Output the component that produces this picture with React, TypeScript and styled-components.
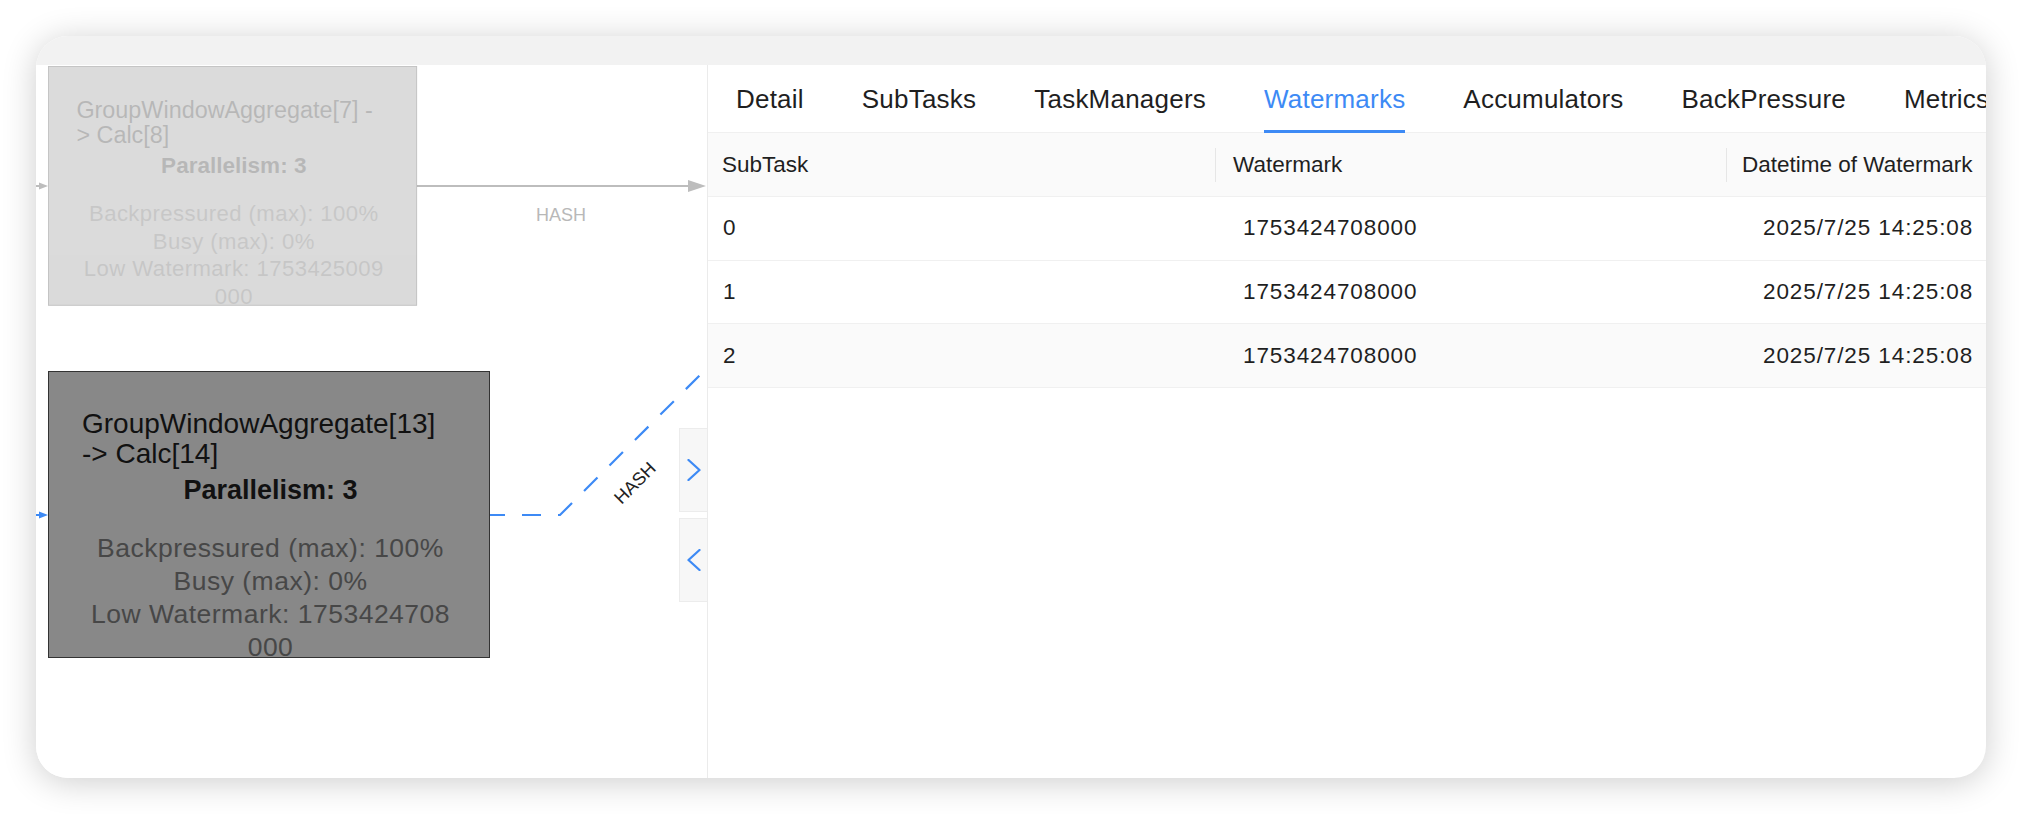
import React from "react";
import styled, { createGlobalStyle } from "styled-components";

const GlobalStyle = createGlobalStyle`
  html, body { margin: 0; padding: 0; background: #ffffff; }
  body { font-family: "Liberation Sans", Arial, Helvetica, sans-serif; }
  #root { width: 2022px; height: 814px; }
`;

const Page = styled.div`
  width: 2022px;
  height: 814px;
  box-sizing: border-box;
  padding: 36px 36px 0 36px;
  overflow: hidden;
  background: #ffffff;
`;

const Window = styled.div`
  width: 1950px;
  height: 742px;
  border-radius: 32px;
  overflow: hidden;
  background: #ffffff;
  box-shadow: 0 4px 34px rgba(0, 0, 0, 0.2);
  display: flex;
  flex-direction: column;
`;

const TitleStrip = styled.div`
  height: 29px;
  flex: none;
  background: #f2f2f2;
`;

const Body = styled.div`
  flex: 1;
  min-height: 0;
  display: flex;
`;

/* ---------- graph canvas ---------- */

const GraphPanel = styled.div`
  position: relative;
  width: 671px;
  flex: none;
  overflow: hidden;
  background: #ffffff;
  border-right: 1px solid #ebebeb;
`;

const EdgeLayer = styled.svg`
  position: absolute;
  left: 0;
  top: 0;
  width: 671px;
  height: 713px;
  font-family: "Liberation Sans", Arial, sans-serif;
`;

const NodeBox = styled.div<{ $x: number; $y: number; $scale: number; $faded?: boolean }>`
  position: absolute;
  left: ${(p) => p.$x}px;
  top: ${(p) => p.$y}px;
  width: 442px;
  height: 287px;
  box-sizing: border-box;
  padding: 37px 30px 0 33px;
  transform: scale(${(p) => p.$scale});
  transform-origin: 0 0;
  opacity: ${(p) => (p.$faded ? 0.3 : 1)};
  background: #888888;
  border: 1px solid #333333;
  overflow: hidden;
`;

const NodeTitle = styled.div`
  font-size: 28px;
  line-height: 30px;
  color: #111111;
  white-space: nowrap;
`;

const NodeParallel = styled.div`
  margin-top: 6px;
  font-size: 27px;
  line-height: 30px;
  font-weight: 700;
  color: #111111;
  text-align: center;
  white-space: nowrap;
`;

const NodeMetrics = styled.div`
  margin-top: 27px;
  font-size: 26.5px;
  line-height: 33px;
  letter-spacing: 0.5px;
  color: #474747;
  text-align: center;
`;

const MetricLine = styled.div`
  white-space: nowrap;
`;

const CollapseButton = styled.button<{ $top: number }>`
  position: absolute;
  right: 0;
  top: ${(p) => p.$top}px;
  width: 28px;
  height: 84px;
  padding: 0;
  display: flex;
  align-items: center;
  justify-content: center;
  background: #f7f7f7;
  border: 1px solid #ececec;
  border-right: none;
  cursor: pointer;
`;

/* ---------- detail panel ---------- */

const DetailPanel = styled.div`
  flex: 1;
  min-width: 0;
  overflow: hidden;
  display: flex;
  flex-direction: column;
`;

const TabBar = styled.div`
  flex: none;
  height: 68px;
  box-sizing: border-box;
  display: flex;
  gap: 58px;
  padding-left: 28px;
  border-bottom: 1px solid #f0f0f0;
  white-space: nowrap;
`;

const Tab = styled.div<{ $active?: boolean }>`
  position: relative;
  flex: none;
  display: flex;
  align-items: center;
  padding-top: 2px;
  font-size: 26px;
  letter-spacing: 0.22px;
  color: ${(p) => (p.$active ? "#3d8af5" : "#1f1f1f")};
  &::after {
    content: "";
    position: absolute;
    left: 0;
    right: 0;
    bottom: -1px;
    height: 3px;
    background: ${(p) => (p.$active ? "#3d8af5" : "transparent")};
  }
`;

const Table = styled.table`
  width: 1278px;
  border-collapse: collapse;
  table-layout: fixed;
  font-size: 22.5px;
  color: #1f1f1f;
`;

const HeadRow = styled.tr`
  background: #fafafa;
`;

const HeadCell = styled.th<{ $pad: number; $sep?: boolean }>`
  position: relative;
  height: 63px;
  padding: 0 0 0 ${(p) => p.$pad}px;
  text-align: left;
  font-weight: 400;
  white-space: nowrap;
  overflow: hidden;
  border-bottom: 1px solid #f0f0f0;
  &::before {
    content: "";
    display: ${(p) => (p.$sep ? "block" : "none")};
    position: absolute;
    right: 0;
    top: 50%;
    width: 1px;
    height: 34px;
    transform: translateY(-50%);
    background: #e6e6e6;
  }
`;

const BodyRow = styled.tr<{ $shaded?: boolean }>`
  background: ${(p) => (p.$shaded ? "#fafafa" : "#ffffff")};
`;

const Cell = styled.td<{ $pad: number; $num?: boolean }>`
  height: 62.7px;
  padding: 0 0 0 ${(p) => p.$pad}px;
  white-space: nowrap;
  overflow: hidden;
  letter-spacing: ${(p) => (p.$num ? "0.9px" : "0")};
  border-bottom: 1px solid #f0f0f0;
`;

/* ---------- pieces ---------- */

type NodeProps = {
  x: number;
  y: number;
  scale: number;
  faded?: boolean;
  title: string[];
  parallelism: number;
  metrics: string[];
};

function GraphNode({ x, y, scale, faded, title, parallelism, metrics }: NodeProps) {
  return (
    <NodeBox $x={x} $y={y} $scale={scale} $faded={faded}>
      {title.map((t) => (
        <NodeTitle key={t}>{t}</NodeTitle>
      ))}
      <NodeParallel>Parallelism: {parallelism}</NodeParallel>
      <NodeMetrics>
        {metrics.map((m) => (
          <MetricLine key={m}>{m}</MetricLine>
        ))}
      </NodeMetrics>
    </NodeBox>
  );
}

function Chevron({ dir }: { dir: "left" | "right" }) {
  const d = dir === "right" ? "M1.5 1 L12.5 11 L1.5 21" : "M12.5 1 L1.5 11 L12.5 21";
  return (
    <svg width="14" height="22" viewBox="0 0 14 22" fill="none">
      <path d={d} stroke="#3d8af5" strokeWidth="2.3" strokeLinecap="round" strokeLinejoin="round" />
    </svg>
  );
}

function Edges() {
  const faded = "#bdbdbd";
  const blue = "#3d8af5";
  return (
    <EdgeLayer viewBox="0 0 671 713">
      {/* faded edge from node 7/8 */}
      <line x1="0" y1="121" x2="4" y2="121" stroke={faded} strokeWidth="2" />
      <polygon points="12,121 3,117.5 3,124.5" fill={faded} />
      <line x1="381" y1="121" x2="654" y2="121" stroke={faded} strokeWidth="2" />
      <polygon points="670,121 652,115 652,127" fill={faded} />
      <text x="525" y="156" fontSize="18" fill="#b8b8b8" textAnchor="middle">
        HASH
      </text>

      {/* highlighted edge from node 13/14 */}
      <line x1="0" y1="450" x2="4" y2="450" stroke={blue} strokeWidth="2" />
      <polygon points="12,450 3,446.5 3,453.5" fill={blue} />
      <path
        d="M 454 450 L 524 450 L 720 254"
        fill="none"
        stroke={blue}
        strokeWidth="2.2"
        strokeDasharray="19 17"
        strokeDashoffset="4"
      />
      <text
        x="599"
        y="424"
        fontSize="18"
        fill="#222222"
        textAnchor="middle"
        transform="rotate(-45 599 418)"
      >
        HASH
      </text>
    </EdgeLayer>
  );
}

const tabs = ["Detail", "SubTasks", "TaskManagers", "Watermarks", "Accumulators", "BackPressure", "Metrics"];

const rows = [
  { subtask: "0", watermark: "1753424708000", datetime: "2025/7/25 14:25:08" },
  { subtask: "1", watermark: "1753424708000", datetime: "2025/7/25 14:25:08" },
  { subtask: "2", watermark: "1753424708000", datetime: "2025/7/25 14:25:08" },
];

export default function App() {
  return (
    <>
      <GlobalStyle />
      <Page>
        <Window>
          <TitleStrip />
          <Body>
            <GraphPanel>
              <Edges />
              <GraphNode
                x={12}
                y={1}
                scale={0.835}
                faded
                title={["GroupWindowAggregate[7] -", "> Calc[8]"]}
                parallelism={3}
                metrics={["Backpressured (max): 100%", "Busy (max): 0%", "Low Watermark: 1753425009", "000"]}
              />
              <GraphNode
                x={12}
                y={306}
                scale={1}
                title={["GroupWindowAggregate[13]", "-> Calc[14]"]}
                parallelism={3}
                metrics={["Backpressured (max): 100%", "Busy (max): 0%", "Low Watermark: 1753424708", "000"]}
              />
              <CollapseButton $top={363} aria-label="expand">
                <Chevron dir="right" />
              </CollapseButton>
              <CollapseButton $top={453} aria-label="collapse">
                <Chevron dir="left" />
              </CollapseButton>
            </GraphPanel>

            <DetailPanel>
              <TabBar>
                {tabs.map((t) => (
                  <Tab key={t} $active={t === "Watermarks"}>
                    {t}
                  </Tab>
                ))}
              </TabBar>
              <Table>
                <colgroup>
                  <col style={{ width: 508 }} />
                  <col style={{ width: 511 }} />
                  <col />
                </colgroup>
                <thead>
                  <HeadRow>
                    <HeadCell $pad={14} $sep>
                      SubTask
                    </HeadCell>
                    <HeadCell $pad={17} $sep>
                      Watermark
                    </HeadCell>
                    <HeadCell $pad={15}>Datetime of Watermark</HeadCell>
                  </HeadRow>
                </thead>
                <tbody>
                  {rows.map((r, i) => (
                    <BodyRow key={r.subtask} $shaded={i === 2}>
                      <Cell $pad={15}>{r.subtask}</Cell>
                      <Cell $pad={27} $num>
                        {r.watermark}
                      </Cell>
                      <Cell $pad={36} $num>
                        {r.datetime}
                      </Cell>
                    </BodyRow>
                  ))}
                </tbody>
              </Table>
            </DetailPanel>
          </Body>
        </Window>
      </Page>
    </>
  );
}
